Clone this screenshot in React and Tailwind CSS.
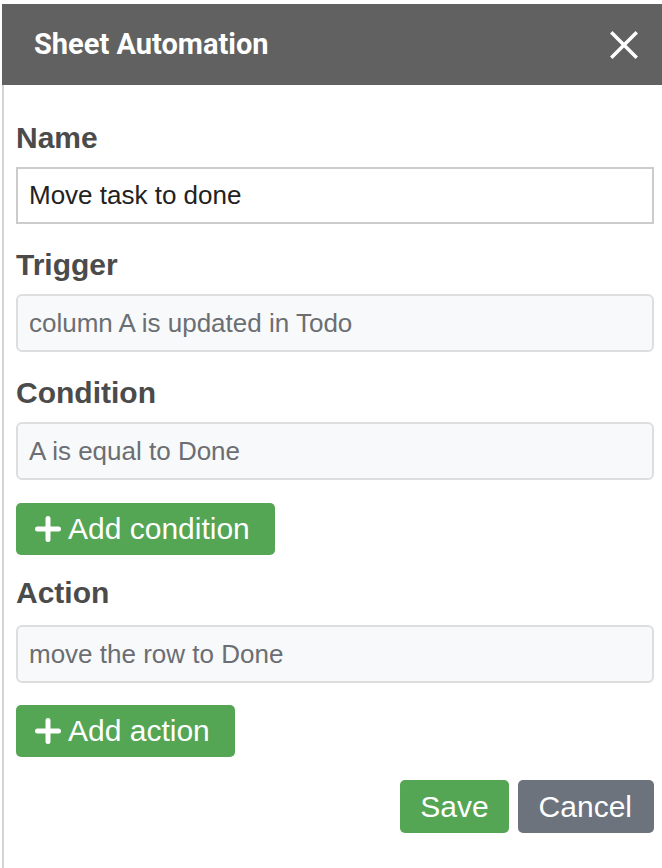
import React, { useState } from 'react';

const SANS = { fontFamily: '"Liberation Sans", Arial, sans-serif' };

function PlusIcon() {
  return (
    <svg width="26" height="26" viewBox="0 0 26 26" className="shrink-0">
      <path d="M13 2.5v21M2.5 13h21" stroke="white" strokeWidth="5" strokeLinecap="round" />
    </svg>
  );
}

function CloseIcon() {
  return (
    <svg width="28" height="28" viewBox="0 0 28 28">
      <path d="M2.5 2.5l23 23M25.5 2.5l-23 23" stroke="white" strokeWidth="3.5" strokeLinecap="square" />
    </svg>
  );
}

function Label({ children, className = '' }) {
  return (
    <div className={`text-[30px] leading-[36px] font-bold text-[#4b4b4b] mb-[11px] ${className}`}>
      {children}
    </div>
  );
}

function ReadonlyField({ value }) {
  return (
    <div className="h-[58px] flex items-center px-[11px] rounded-[6px] border-2 border-[#dedede] bg-[#f8f9fa] text-[26px] text-[#6b6e72]">
      {value}
    </div>
  );
}

function AddButton({ children }) {
  return (
    <button className="self-start h-[52px] flex items-center gap-[7px] pl-[19px] pr-[25px] rounded-[5px] bg-[#54a554] text-white text-[30px] leading-none">
      <PlusIcon />
      {children}
    </button>
  );
}

export default function App() {
  const [name, setName] = useState('Move task to done');

  return (
    <div className="w-full min-h-screen bg-white pt-[4px] pl-[2px]" style={SANS}>
      <div className="flex flex-col">
        <div className="h-[81px] bg-[#616161] flex items-center justify-between pl-[32px] pr-[24px]">
          <h1 className="text-white font-bold text-[29px]" style={{ fontFamily: 'Roboto, "Liberation Sans", sans-serif' }}>
            Sheet Automation
          </h1>
          <button aria-label="Close"><CloseIcon /></button>
        </div>

        <div className="border-l-2 border-[#d4d4d4] pl-[12px] pr-[8px] pt-[35px] pb-[35px] flex flex-col min-h-[783px]">
          <Label>Name</Label>
          <input
            value={name}
            onChange={e => setName(e.target.value)}
            className="h-[57px] px-[11px] border-2 border-[#cccccc] text-[26px] text-[#222] outline-none"
          />

          <Label className="mt-[23px]">Trigger</Label>
          <ReadonlyField value="column A is updated in Todo" />

          <Label className="mt-[23px]">Condition</Label>
          <ReadonlyField value="A is equal to Done" />

          <div className="mt-[23px] flex">
            <AddButton>Add condition</AddButton>
          </div>

          <Label className="mt-[20px] !mb-[14px]">Action</Label>
          <ReadonlyField value="move the row to Done" />

          <div className="mt-[22px] flex">
            <AddButton>Add action</AddButton>
          </div>

          <div className="mt-[23px] flex justify-end gap-[9px]">
            <button className="h-[53px] px-[20px] rounded-[5px] bg-[#54a554] text-white text-[30px] leading-none">Save</button>
            <button className="h-[53px] pl-[21px] pr-[22px] rounded-[5px] bg-[#6c737c] text-white text-[30px] leading-none">Cancel</button>
          </div>
        </div>
      </div>
    </div>
  );
}
